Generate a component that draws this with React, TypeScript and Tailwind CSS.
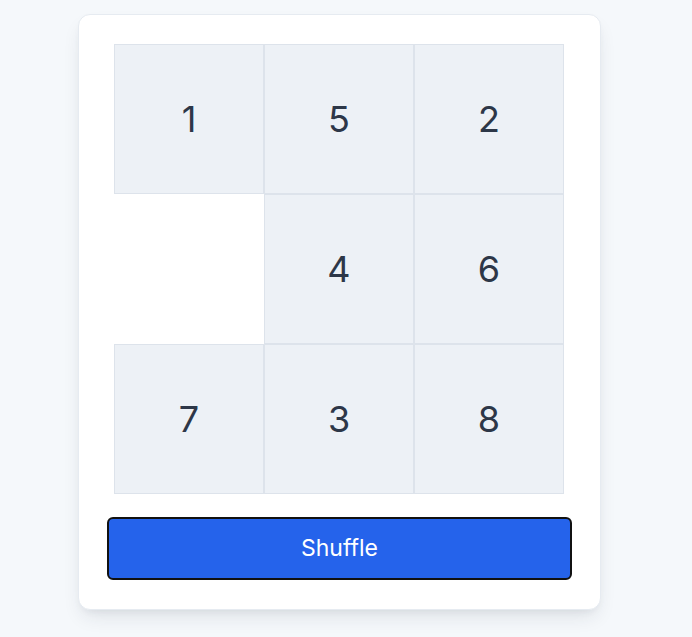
const tiles: (number | null)[] = [1, 5, 2, null, 4, 6, 7, 3, 8]

export default function App() {
  return (
    <div className="min-h-[637px] w-full bg-[#f5f8fb] pt-[14px] pl-[78px]" style={{ fontFamily: 'Inter, "Noto Sans", sans-serif' }}>
      <div className="w-[523px] rounded-xl border border-[#e6ebf1] bg-white px-[28px] pt-[29px] pb-[29px] shadow-[0_10px_20px_-5px_rgba(30,41,59,0.12),0_4px_8px_-4px_rgba(30,41,59,0.08)]">
        <div className="ml-[7px] grid w-[450px] grid-cols-3">
          {tiles.map((t, i) =>
            t === null ? (
              <div key={i} className="h-[150px] w-[150px]" />
            ) : (
              <div
                key={i}
                className="flex h-[150px] w-[150px] items-center justify-center border border-[#dde3eb] bg-[#edf1f6] text-[36px] text-[#2d3748]"
              >
                {t}
              </div>
            )
          )}
        </div>
        <button
          type="button"
          className="mt-[23px] flex h-[63px] w-full items-center justify-center rounded-md border-2 border-[#111111] bg-[#2563eb] text-[23px] text-white"
        >
          Shuffle
        </button>
      </div>
    </div>
  )
}
